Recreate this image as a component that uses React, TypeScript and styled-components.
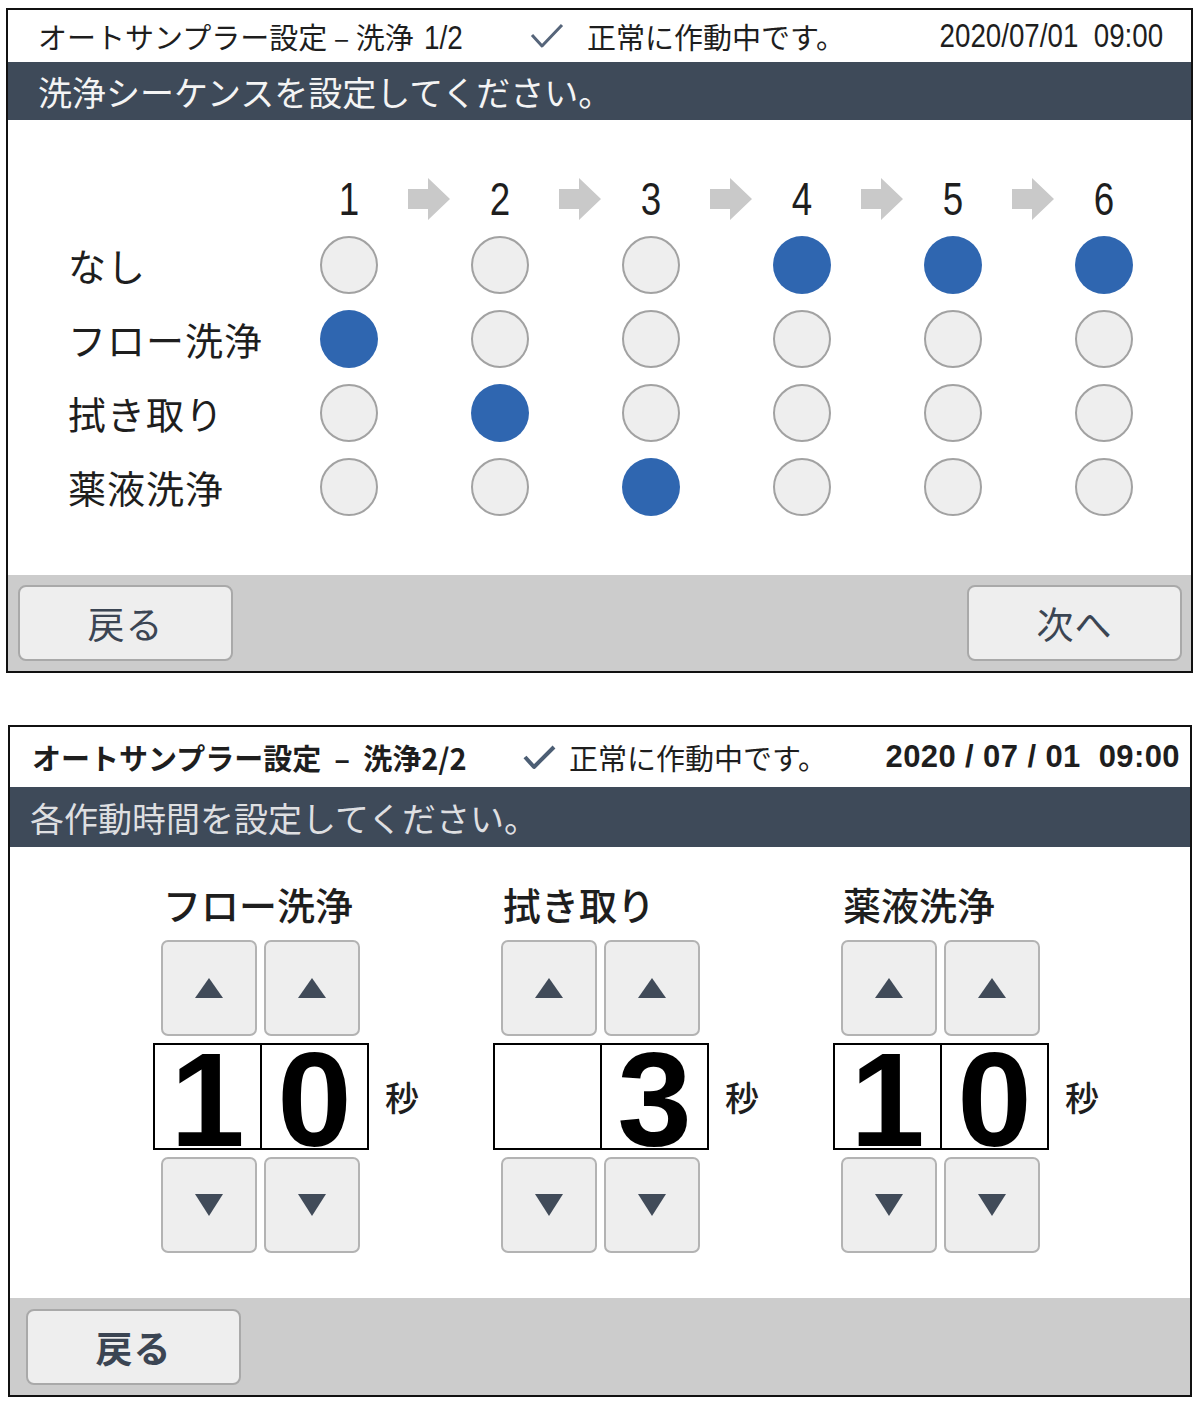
import React from 'react';
import styled, { createGlobalStyle } from 'styled-components';

const JP = `"Noto Sans CJK JP", "Noto Sans", sans-serif`;
const NARROW = `"Liberation Sans Narrow", "Liberation Sans", "Noto Sans CJK JP", sans-serif`;
const DIGIT = `"Liberation Sans", Arial, sans-serif`;

const GlobalStyle = createGlobalStyle`
  html, body {
    margin: 0;
    padding: 0;
    background: #fff;
  }
  body {
    font-family: ${JP};
    color: #222;
  }
`;

const steps = ['1', '2', '3', '4', '5', '6'];

const sequence = [
  { label: 'なし', picked: [3, 4, 5] },
  { label: 'フロー洗浄', picked: [0] },
  { label: '拭き取り', picked: [1] },
  { label: '薬液洗浄', picked: [2] },
];

const timers = [
  { label: 'フロー洗浄', tens: '1', ones: '0' },
  { label: '拭き取り', tens: '', ones: '3' },
  { label: '薬液洗浄', tens: '1', ones: '0' },
];

const CheckMark = ({ bold }: { bold?: boolean }) => (
  <svg width="34" height="26" viewBox="0 0 34 26">
    <polyline
      points={bold ? '2,13 11,23 31,3' : '2,12 12,23 32,2'}
      fill="none"
      stroke={bold ? '#4c5e74' : '#56657a'}
      strokeWidth={bold ? 4 : 3}
      strokeLinejoin="round"
    />
  </svg>
);

const StepArrow = () => (
  <svg width="42" height="42" viewBox="0 0 42 42">
    <polygon points="0,11 20,11 20,0 42,21 20,42 20,31 0,31" fill="#c9c9c9" />
  </svg>
);

const SequenceScreen = () => (
  <Panel left={6} width={1187}>
    <StatusBar height={52} pad={30} padRight={28}>
      <Title width={492} size={29}>
        オートサンプラー設定 – 洗浄 <Narrow>1/2</Narrow>
      </Title>
      <Status gap={23}>
        <CheckMark />
        正常に作動中です。
      </Status>
      <Clock>2020/07/01&nbsp;&nbsp;09:00</Clock>
    </StatusBar>
    <Prompt height={58} pad={30} size={34} tone="#f4f4f4">
      洗浄シーケンスを設定してください。
    </Prompt>
    <SequenceBody>
      <SeqRow height={58}>
        {steps.map((s, i) => (
          <React.Fragment key={s}>
            <StepNumber col={i}>{s}</StepNumber>
            {i < steps.length - 1 && (
              <ArrowCell col={i}>
                <StepArrow />
              </ArrowCell>
            )}
          </React.Fragment>
        ))}
      </SeqRow>
      {sequence.map((row) => (
        <SeqRow key={row.label} height={74}>
          <RowLabel>{row.label}</RowLabel>
          {steps.map((s, i) => (
            <Dot key={s} col={i} active={row.picked.includes(i)} />
          ))}
        </SeqRow>
      ))}
    </SequenceBody>
    <Footer height={96} padLeft={10} padRight={9}>
      <NavButton>戻る</NavButton>
      <NavButton>次へ</NavButton>
    </Footer>
  </Panel>
);

const TimerScreen = () => (
  <Panel left={8} width={1184}>
    <StatusBar height={60} pad={22} padRight={10} strong>
      <Title width={491} size={29}>
        オートサンプラー設定 &nbsp;–&nbsp; 洗浄2/2
      </Title>
      <Status gap={12}>
        <CheckMark bold />
        正常に作動中です。
      </Status>
      <BoldClock>2020 / 07 / 01&nbsp;&nbsp;09:00</BoldClock>
    </StatusBar>
    <Prompt height={60} pad={20} size={34} tone="#dedfe1">
      各作動時間を設定してください。
    </Prompt>
    <TimerBody>
      {timers.map((t) => (
        <TimerGroup key={t.label}>
          <TimerLabel>{t.label}</TimerLabel>
          <StepRow>
            <StepButton>
              <Triangle dir="up" />
            </StepButton>
            <StepButton>
              <Triangle dir="up" />
            </StepButton>
          </StepRow>
          <ValueRow>
            <DigitBox>
              <DigitCell>
                <Digit>{t.tens}</Digit>
              </DigitCell>
              <DigitCell>
                <Digit>{t.ones}</Digit>
              </DigitCell>
            </DigitBox>
            <Unit>秒</Unit>
          </ValueRow>
          <StepRow>
            <StepButton>
              <Triangle dir="down" />
            </StepButton>
            <StepButton>
              <Triangle dir="down" />
            </StepButton>
          </StepRow>
        </TimerGroup>
      ))}
    </TimerBody>
    <Footer height={97} padLeft={16} padRight={16}>
      <NavButton strong>戻る</NavButton>
    </Footer>
  </Panel>
);

export default function App() {
  return (
    <>
      <GlobalStyle />
      <Page>
        <SequenceScreen />
        <TimerScreen />
      </Page>
    </>
  );
}

const Page = styled.div`
  width: 1200px;
  padding: 8px 0 6px;
  display: flex;
  flex-direction: column;
  gap: 52px;
`;

const Panel = styled.section<{ left: number; width: number }>`
  margin-left: ${({ left }) => left}px;
  width: ${({ width }) => width}px;
  box-sizing: border-box;
  border: 2px solid #111;
  background: #fff;
  display: flex;
  flex-direction: column;
`;

const StatusBar = styled.header<{ height: number; pad: number; padRight: number; strong?: boolean }>`
  height: ${({ height }) => height}px;
  padding: 0 ${({ padRight }) => padRight}px 0 ${({ pad }) => pad}px;
  display: flex;
  align-items: center;
  font-weight: ${({ strong }) => (strong ? 700 : 400)};
  color: #1e1e1e;
  white-space: nowrap;
`;

const Title = styled.div<{ width: number; size: number }>`
  width: ${({ width }) => width}px;
  font-size: ${({ size }) => size}px;
  flex: none;
`;

const Narrow = styled.span`
  display: inline-block;
  margin-left: 4px;
  font-family: ${NARROW};
  font-size: 34px;
  transform: scaleX(0.82);
  transform-origin: left center;
`;

const Status = styled.div<{ gap: number }>`
  flex: 1;
  display: flex;
  align-items: center;
  gap: ${({ gap }) => gap}px;
  font-weight: 400;
  font-size: 29px;
`;

const Clock = styled.div`
  font-family: ${NARROW};
  font-size: 33px;
  transform: scaleX(0.84);
  transform-origin: right center;
`;

const BoldClock = styled.div`
  font-family: ${DIGIT};
  font-size: 31px;
  font-weight: 700;
  letter-spacing: 0.4px;
`;

const Prompt = styled.div<{ height: number; pad: number; size: number; tone: string }>`
  height: ${({ height }) => height}px;
  padding-left: ${({ pad }) => pad}px;
  background: #3e4a59;
  color: ${({ tone }) => tone};
  font-size: ${({ size }) => size}px;
  display: flex;
  align-items: center;
`;

const SequenceBody = styled.div`
  height: 455px;
  box-sizing: border-box;
  padding: 50px 0 0 60px;
`;

const SeqRow = styled.div<{ height: number }>`
  height: ${({ height }) => height}px;
  display: grid;
  grid-template-columns: 251px repeat(5, 60px 91px) 60px;
  align-items: center;
`;

const StepNumber = styled.div<{ col: number }>`
  grid-column: ${({ col }) => col * 2 + 2};
  text-align: center;
  font-family: ${NARROW};
  font-size: 46px;
  line-height: 58px;
  color: #1e1e1e;
  transform: scaleX(0.8);
`;

const ArrowCell = styled.div<{ col: number }>`
  grid-column: ${({ col }) => col * 2 + 3};
  justify-self: center;
  margin-left: 9px;
  display: flex;
`;

const RowLabel = styled.div`
  grid-column: 1;
  font-size: 38px;
  line-height: 74px;
  color: #1e1e1e;
  letter-spacing: 1px;
`;

const Dot = styled.div<{ col: number; active: boolean }>`
  grid-column: ${({ col }) => col * 2 + 2};
  grid-row: 1;
  justify-self: center;
  width: 58px;
  height: 58px;
  box-sizing: border-box;
  border-radius: 50%;
  background: ${({ active }) => (active ? '#2f66b0' : '#eeeeee')};
  border: ${({ active }) => (active ? 'none' : '2px solid #a2a2a2')};
`;

const Footer = styled.footer<{ height: number; padLeft: number; padRight: number }>`
  height: ${({ height }) => height}px;
  padding: 0 ${({ padRight }) => padRight}px 0 ${({ padLeft }) => padLeft}px;
  background: #cccccc;
  display: flex;
  align-items: center;
  justify-content: space-between;
`;

const NavButton = styled.button<{ strong?: boolean }>`
  width: 215px;
  height: 76px;
  box-sizing: border-box;
  border: 2px solid #a9a9a9;
  border-radius: 8px;
  background: #eeeeee;
  font-family: ${JP};
  font-size: 37px;
  font-weight: ${({ strong }) => (strong ? 700 : 400)};
  color: #3b4553;
  padding: 0;
  letter-spacing: 1px;
`;

const TimerBody = styled.div`
  height: 451px;
  box-sizing: border-box;
  padding: 34px 0 0 143px;
  display: grid;
  grid-template-columns: repeat(3, 340px);
  align-items: start;
`;

const TimerGroup = styled.div`
  display: flex;
  flex-direction: column;
  gap: 7px;
`;

const TimerLabel = styled.div`
  margin: 0 0 6px 10px;
  font-size: 38px;
  font-weight: 500;
  line-height: 46px;
  color: #1e1e1e;
`;

const StepRow = styled.div`
  display: flex;
  gap: 7px;
  padding-left: 8px;
`;

const StepButton = styled.div`
  width: 96px;
  height: 96px;
  box-sizing: border-box;
  border: 2px solid #b3b3b3;
  border-radius: 7px;
  background: #eeeeee;
  display: flex;
  align-items: center;
  justify-content: center;
`;

const Triangle = styled.span<{ dir: 'up' | 'down' }>`
  width: 0;
  height: 0;
  border-left: 14px solid transparent;
  border-right: 14px solid transparent;
  ${({ dir }) =>
    dir === 'up' ? 'border-bottom: 20px solid #414b59;' : 'border-top: 22px solid #414b59;'}
`;

const ValueRow = styled.div`
  display: flex;
  align-items: center;
`;

const DigitBox = styled.div`
  width: 216px;
  height: 107px;
  box-sizing: border-box;
  border: 2px solid #000;
  display: flex;
`;

const DigitCell = styled.div`
  flex: 1;
  overflow: hidden;
  display: flex;
  align-items: flex-end;
  justify-content: center;
  & + & {
    border-left: 2px solid #000;
  }
`;

const Digit = styled.span`
  font-family: ${DIGIT};
  font-weight: 700;
  font-size: 134px;
  line-height: 96px;
  color: #000;
`;

const Unit = styled.span`
  margin-left: 16px;
  font-size: 34px;
  font-weight: 500;
  color: #1e1e1e;
`;
